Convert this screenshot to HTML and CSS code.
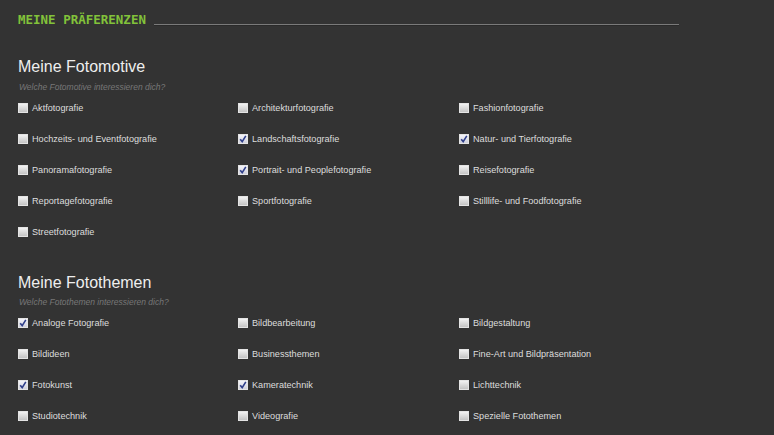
FILE: index.html
```html
<!DOCTYPE html>
<html lang="de">
<head>
	<meta charset="utf-8" />
	<title>Meine Präferenzen</title>
	<link rel="stylesheet" href="styles.css">
</head>
<body>
	<div class="page">
		<div class="pref-head">
			<h1>MEINE PRÄFERENZEN</h1>
			<span class="rule"></span>
		</div>

		<section class="group first">
			<h2>Meine Fotomotive</h2>
			<p class="hint">Welche Fotomotive interessieren dich?</p>
			<div class="options">
				<label class="opt"><span class="box"></span>Aktfotografie</label>
				<label class="opt"><span class="box"></span>Architekturfotografie</label>
				<label class="opt"><span class="box"></span>Fashionfotografie</label>
				<label class="opt"><span class="box"></span>Hochzeits- und Eventfotografie</label>
				<label class="opt"><span class="box on"><svg viewBox="0 0 10 10"><path d="M2.2 5.2 L4.2 7.6 L7.8 1.8" /></svg></span>Landschaftsfotografie</label>
				<label class="opt"><span class="box on"><svg viewBox="0 0 10 10"><path d="M2.2 5.2 L4.2 7.6 L7.8 1.8" /></svg></span>Natur- und Tierfotografie</label>
				<label class="opt"><span class="box"></span>Panoramafotografie</label>
				<label class="opt"><span class="box on"><svg viewBox="0 0 10 10"><path d="M2.2 5.2 L4.2 7.6 L7.8 1.8" /></svg></span>Portrait- und Peoplefotografie</label>
				<label class="opt"><span class="box"></span>Reisefotografie</label>
				<label class="opt"><span class="box"></span>Reportagefotografie</label>
				<label class="opt"><span class="box"></span>Sportfotografie</label>
				<label class="opt"><span class="box"></span>Stilllife- und Foodfotografie</label>
				<label class="opt"><span class="box"></span>Streetfotografie</label>
			</div>
		</section>

		<section class="group second">
			<h2>Meine Fotothemen</h2>
			<p class="hint">Welche Fotothemen interessieren dich?</p>
			<div class="options">
				<label class="opt"><span class="box on"><svg viewBox="0 0 10 10"><path d="M2.2 5.2 L4.2 7.6 L7.8 1.8" /></svg></span>Analoge Fotografie</label>
				<label class="opt"><span class="box"></span>Bildbearbeitung</label>
				<label class="opt"><span class="box"></span>Bildgestaltung</label>
				<label class="opt"><span class="box"></span>Bildideen</label>
				<label class="opt"><span class="box"></span>Businessthemen</label>
				<label class="opt"><span class="box"></span>Fine-Art und Bildpräsentation</label>
				<label class="opt"><span class="box on"><svg viewBox="0 0 10 10"><path d="M2.2 5.2 L4.2 7.6 L7.8 1.8" /></svg></span>Fotokunst</label>
				<label class="opt"><span class="box on"><svg viewBox="0 0 10 10"><path d="M2.2 5.2 L4.2 7.6 L7.8 1.8" /></svg></span>Kameratechnik</label>
				<label class="opt"><span class="box"></span>Lichttechnik</label>
				<label class="opt"><span class="box"></span>Studiotechnik</label>
				<label class="opt"><span class="box"></span>Videografie</label>
				<label class="opt"><span class="box"></span>Spezielle Fotothemen</label>
			</div>
		</section>
	</div>
</body>
</html>
```

FILE: styles.css
```css
html, body {
	margin: 0;
	background: #333333;
}

body {
	font-family: "Liberation Sans", Arial, sans-serif;
	color: #dddddd;
}

.page {
	padding: 12px 18px 0 18px;
}

.pref-head {
	display: flex;
	align-items: center;
	height: 16px;
}

.pref-head h1 {
	margin: 0;
	font-family: "DejaVu Sans Mono", monospace;
	font-size: 12.5px;
	font-weight: bold;
	line-height: 16px;
	color: #82c23a;
}

.pref-head .rule {
	flex: none;
	width: 525px;
	height: 1px;
	margin: 8px 0 0 8px;
	background: #7a7a7a;
	box-shadow: 0 1px 0 #2a2a2a;
}

.group h2 {
	margin: 0;
	font-size: 16px;
	font-weight: normal;
	line-height: 20px;
	color: #eeeeee;
}

.group.first h2 {
	margin-top: 29px;
}

.group.second h2 {
	margin-top: 26px;
}

.hint {
	margin: 5px 0 0 1px;
	font-size: 8.5px;
	font-style: italic;
	line-height: 10px;
	color: #777777;
}

.group.second .hint {
	margin-top: 4px;
}

.options {
	display: grid;
	grid-template-columns: 220px 221px 1fr;
	grid-auto-rows: 31px;
}

.opt {
	display: flex;
	align-items: center;
	gap: 4px;
	font-size: 9.15px;
	color: #dddddd;
}

.box {
	flex: none;
	width: 8px;
	height: 8px;
	border: 1px solid #e4e4e4;
	background: linear-gradient(#f2f2f2, #c4c4c4);
	display: flex;
}

.box.on {
	background: linear-gradient(#f4f4fa, #cfd0dc);
}

.box svg {
	width: 10px;
	height: 10px;
	margin: -1px;
}

.box path {
	fill: none;
	stroke: #2f3f8a;
	stroke-width: 1.6;
}
```
